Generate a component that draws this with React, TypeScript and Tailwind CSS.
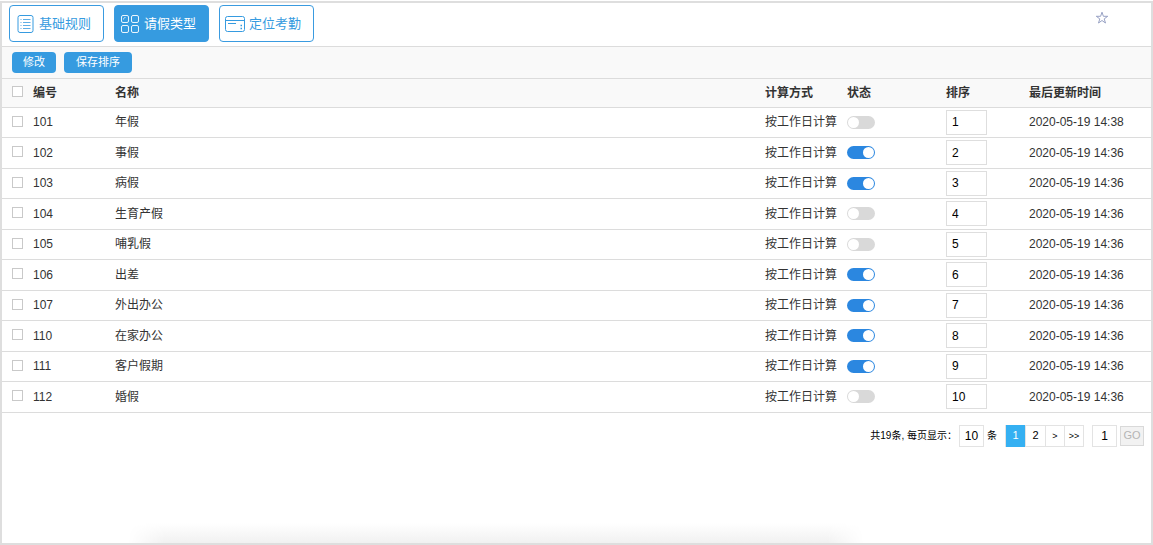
import { useState, type ReactNode } from 'react';

type LeaveType = {
  id: string;
  name: string;
  enabled: boolean;
  order: string;
  updated: string;
};

const initialRows: LeaveType[] = [
  { id: '101', name: '年假', enabled: false, order: '1', updated: '2020-05-19 14:38' },
  { id: '102', name: '事假', enabled: true, order: '2', updated: '2020-05-19 14:36' },
  { id: '103', name: '病假', enabled: true, order: '3', updated: '2020-05-19 14:36' },
  { id: '104', name: '生育产假', enabled: false, order: '4', updated: '2020-05-19 14:36' },
  { id: '105', name: '哺乳假', enabled: false, order: '5', updated: '2020-05-19 14:36' },
  { id: '106', name: '出差', enabled: true, order: '6', updated: '2020-05-19 14:36' },
  { id: '107', name: '外出办公', enabled: true, order: '7', updated: '2020-05-19 14:36' },
  { id: '110', name: '在家办公', enabled: true, order: '8', updated: '2020-05-19 14:36' },
  { id: '111', name: '客户假期', enabled: true, order: '9', updated: '2020-05-19 14:36' },
  { id: '112', name: '婚假', enabled: false, order: '10', updated: '2020-05-19 14:36' },
];

function RulesIcon() {
  return (
    <svg className="h-5 w-5 shrink-0" viewBox="0 0 20 20" fill="none" stroke="currentColor" aria-hidden="true">
      <rect x="3" y="1.5" width="15" height="17" rx="2" />
      <path d="M8 5.500h7.500M8 8.500h7.500M8 11.500h7.500M8 14.500h7.500M5.500 5.500h1M5.500 8.500h1M5.500 11.500h1M5.500 14.500h1" strokeWidth=".8" />
    </svg>
  );
}

function GridIcon() {
  return (
    <svg className="h-5 w-5 shrink-0" viewBox="0 0 20 20" fill="none" stroke="currentColor" strokeWidth=".9" aria-hidden="true">
      <rect x="1.5" y="1.5" width="7" height="7" rx="1.5" />
      <rect x="11.5" y="1.5" width="7" height="7" rx="1.5" />
      <rect x="1.5" y="11.5" width="7" height="7" rx="1.5" />
      <rect x="11.5" y="11.5" width="7" height="7" rx="1.5" />
      <path d="M3.500 5.500c0-1.300.7-2 2-2" strokeWidth=".7" />
    </svg>
  );
}

function CardIcon() {
  return (
    <svg className="h-5 w-5 shrink-0" viewBox="0 0 20 20" fill="none" stroke="currentColor" aria-hidden="true">
      <rect x=".5" y="2.500" width="19" height="15" rx="2" />
      <path d="M.5 6.500h19M3 9.500h8" />
      <path d="M15.500 11.500h1.500M15.500 14.500h1.500" strokeWidth="1.500" />
    </svg>
  );
}

function Tab({ icon, label, active, onClick }: { icon: ReactNode; label: string; active: boolean; onClick: () => void }) {
  return (
    <button
      type="button"
      onClick={onClick}
      className={`flex h-[37px] w-[95px] items-center gap-1 rounded border border-[#3a9be0] pl-[5px] text-[13px] whitespace-nowrap ${
        active ? 'bg-[#369be0] text-white' : 'bg-white text-[#369be0]'
      }`}
    >
      {icon}
      <span>{label}</span>
    </button>
  );
}

function Tick({ label, checked, onChange }: { label: string; checked: boolean; onChange: () => void }) {
  return (
    <input
      type="checkbox"
      aria-label={label}
      checked={checked}
      onChange={onChange}
      className="mb-0.5 block h-[11px] w-[11px] appearance-none border border-[#c9c9c9] bg-white checked:bg-[#369be0]"
    />
  );
}

export default function App() {
  const [rows, setRows] = useState(initialRows);
  const [selected, setSelected] = useState<string[]>([]);
  const [tab, setTab] = useState(1);
  const [page, setPage] = useState(1);
  const [size, setSize] = useState('10');
  const [target, setTarget] = useState('1');

  const update = (id: string, patch: Partial<LeaveType>) =>
    setRows(rows.map((r) => (r.id === id ? { ...r, ...patch } : r)));
  const toggle = (id: string) =>
    setSelected(selected.includes(id) ? selected.filter((s) => s !== id) : [...selected, id]);
  const all = selected.length === rows.length;

  return (
    <div className="flex min-h-screen flex-col bg-white pt-px font-['Liberation_Sans','Noto_Sans_CJK_SC',sans-serif] text-xs text-[#333]">
      <div className="flex flex-1 flex-col border-2 border-[#dedede]">
        <header className="flex h-11 items-start justify-between border-b border-[#dcdcdc] pt-0.5 pr-[42px] pl-[7px]">
          <nav className="flex gap-2.5">
            <Tab icon={<RulesIcon />} label="基础规则" active={tab === 0} onClick={() => setTab(0)} />
            <Tab icon={<GridIcon />} label="请假类型" active={tab === 1} onClick={() => setTab(1)} />
            <Tab icon={<CardIcon />} label="定位考勤" active={tab === 2} onClick={() => setTab(2)} />
          </nav>
          <button type="button" aria-label="收藏" className="mt-1.5 text-[#8d97bd]">
            <svg className="h-3.5 w-3.5" viewBox="0 0 14 14" fill="none" stroke="currentColor" strokeWidth=".9" aria-hidden="true">
              <path d="M7 1.200L8.400 5.300H12.700L9.200 7.900L10.500 12L7 9.500L3.500 12L4.800 7.900L1.300 5.300H5.600Z" />
            </svg>
          </button>
        </header>

        <div className="flex h-8 items-center gap-2 border-b border-[#dcdcdc] bg-[#f9f9f9] pl-2.5 text-[11px] text-white">
          <button type="button" className="h-[21px] rounded-sm bg-[#369be0] px-[11px]">修改</button>
          <button type="button" className="h-[21px] rounded-sm bg-[#369be0] px-3">保存排序</button>
        </div>

        <table className="w-full table-fixed border-collapse text-left">
          <colgroup>
            <col className="w-[31px]" />
            <col className="w-[82px]" />
            <col />
            <col className="w-[82px]" />
            <col className="w-[99px]" />
            <col className="w-[83px]" />
            <col className="w-[122px]" />
          </colgroup>
          <thead>
            <tr className="h-7 border-b border-[#dcdcdc] bg-[#f9f9f9]">
              <th className="pl-2.5"><Tick label="全选" checked={all} onChange={() => setSelected(all ? [] : rows.map((r) => r.id))} /></th>
              <th className="font-bold">编号</th>
              <th className="font-bold">名称</th>
              <th className="font-bold">计算方式</th>
              <th className="font-bold">状态</th>
              <th className="font-bold">排序</th>
              <th className="font-bold">最后更新时间</th>
            </tr>
          </thead>
          <tbody>
            {rows.map((r) => (
              <tr key={r.id} className="border-b border-[#dcdcdc] odd:h-[30px] even:h-[31px]">
                <td className="pl-2.5"><Tick label={`选择${r.name}`} checked={selected.includes(r.id)} onChange={() => toggle(r.id)} /></td>
                <td>{r.id}</td>
                <td>{r.name}</td>
                <td className="whitespace-nowrap">按工作日计算</td>
                <td>
                  <input
                    type="checkbox"
                    role="switch"
                    aria-label={`${r.name}状态`}
                    checked={r.enabled}
                    onChange={() => update(r.id, { enabled: !r.enabled })}
                    className="flex h-[13px] w-7 appearance-none items-center rounded-full bg-[#d9d9d9] px-px before:h-[11px] before:w-[11px] before:rounded-full before:bg-white checked:justify-end checked:bg-[#2b87e0]"
                  />
                </td>
                <td>
                  <input
                    type="text"
                    aria-label={`${r.name}排序`}
                    value={r.order}
                    onChange={(e) => update(r.id, { order: e.target.value })}
                    className="block h-[25px] w-[41px] border border-[#dedede] bg-white px-[5px] text-black"
                  />
                </td>
                <td className="whitespace-nowrap">{r.updated}</td>
              </tr>
            ))}
          </tbody>
        </table>

        <footer className="flex items-center justify-end pt-3 pr-[7px] text-[10px] text-black">
          <label htmlFor="size" className="mr-0.5">共19条, 每页显示：</label>
          <input id="size" value={size} onChange={(e) => setSize(e.target.value)} className="mr-[3px] h-[22px] w-[25px] border border-[#e3e3e3] text-center text-xs" />
          <span className="mr-2">条</span>
          <div className="mr-2 flex h-[22px] border-y border-l border-[#e3e3e3]">
            {[1, 2].map((n) => (
              <button
                key={n}
                type="button"
                onClick={() => setPage(n)}
                className={`w-5 border-r border-[#e3e3e3] text-center text-[11px] ${page === n ? '-my-px bg-[#35b0f2] text-white' : ''}`}
              >
                {n}
              </button>
            ))}
            <button type="button" aria-label="下一页" onClick={() => setPage(2)} className="w-[19px] border-r border-[#e3e3e3] text-center text-[9px]">&gt;</button>
            <button type="button" aria-label="末页" onClick={() => setPage(2)} className="w-[19px] border-r border-[#e3e3e3] text-center text-[9px]">&gt;&gt;</button>
          </div>
          <input aria-label="跳转页码" value={target} onChange={(e) => setTarget(e.target.value)} className="mr-[3px] h-[22px] w-[25px] border border-[#e3e3e3] text-center text-xs" />
          <button type="button" className="h-5 w-6 border border-[#d9d9d9] bg-[#f2f2f2] text-center text-[11px] text-[#b5b5b5]">GO</button>
        </footer>

        <div className="mt-auto mr-[25%] ml-[11%] h-5 bg-linear-to-t from-[#f1f1f1] to-white [mask-image:linear-gradient(to_right,transparent,black_5%,black_95%,transparent)]" />
      </div>
    </div>
  );
}
